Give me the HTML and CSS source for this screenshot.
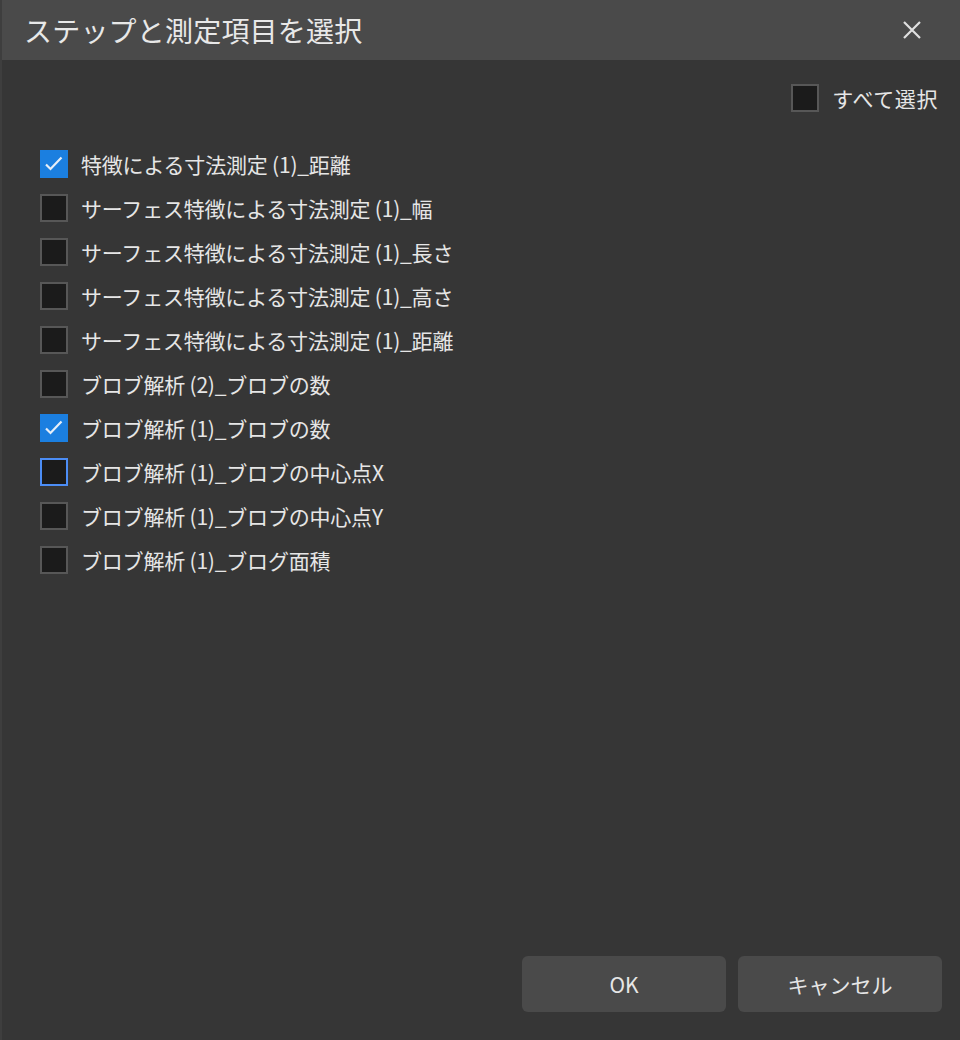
FILE: index.html
```html
<!DOCTYPE html>
<html lang="ja">
<head>
<meta charset="utf-8">
<title>ステップと測定項目を選択</title>
<link rel="stylesheet" href="styles.css">
</head>
<body>
<div class="dialog">
  <header class="titlebar">
    <h1 class="title">ステップと測定項目を選択</h1>
    <button class="close" aria-label="閉じる">
      <svg width="20" height="20" viewBox="0 0 20 20"><path d="M2 2 L18 18 M18 2 L2 18" stroke="#e0e0e0" stroke-width="2.2" fill="none"/></svg>
    </button>
  </header>
  <main class="content">
    <div class="select-all">
      <label class="item"><span class="box"></span><span class="label wide">すべて選択</span></label>
    </div>
    <ul class="list">
      <li class="item"><span class="box checked"><svg viewBox="0 0 28 28" width="28" height="28"><path d="M6 14.5 L10.5 19 L21.5 7.5" stroke="#e6eef8" stroke-width="2.2" fill="none"/></svg></span><span class="label">特徴による寸法測定 (1)_距離</span></li>
      <li class="item"><span class="box"></span><span class="label">サーフェス特徴による寸法測定 (1)_幅</span></li>
      <li class="item"><span class="box"></span><span class="label">サーフェス特徴による寸法測定 (1)_長さ</span></li>
      <li class="item"><span class="box"></span><span class="label">サーフェス特徴による寸法測定 (1)_高さ</span></li>
      <li class="item"><span class="box"></span><span class="label">サーフェス特徴による寸法測定 (1)_距離</span></li>
      <li class="item"><span class="box"></span><span class="label">ブロブ解析 (2)_ブロブの数</span></li>
      <li class="item"><span class="box checked"><svg viewBox="0 0 28 28" width="28" height="28"><path d="M6 14.5 L10.5 19 L21.5 7.5" stroke="#e6eef8" stroke-width="2.2" fill="none"/></svg></span><span class="label">ブロブ解析 (1)_ブロブの数</span></li>
      <li class="item"><span class="box focus"></span><span class="label">ブロブ解析 (1)_ブロブの中心点X</span></li>
      <li class="item"><span class="box"></span><span class="label">ブロブ解析 (1)_ブロブの中心点Y</span></li>
      <li class="item"><span class="box"></span><span class="label">ブロブ解析 (1)_ブログ面積</span></li>
    </ul>
    <footer class="actions">
      <button class="btn">OK</button>
      <button class="btn">キャンセル</button>
    </footer>
  </main>
</div>
</body>
</html>
```
FILE: styles.css
```css
html, body {
  margin: 0;
  padding: 0;
  height: 100%;
}
body {
  background: #363636;
  font-family: "Noto Sans CJK JP", "Noto Sans", sans-serif;
  color: #e6e6e6;
}
.dialog {
  height: 1040px;
  display: flex;
  flex-direction: column;
  border-left: 2px solid #3e3e3e;
  box-sizing: border-box;
}
.titlebar {
  height: 60px;
  flex: 0 0 60px;
  background: #4a4a4a;
  display: flex;
  align-items: center;
  justify-content: space-between;
  padding: 0 38px 0 22px;
}
.title {
  margin: 0;
  font-size: 28px;
  font-weight: 400;
  line-height: 1;
  color: #e8e8e8;
  letter-spacing: 0.2px;
}
.close {
  background: none;
  border: 0;
  padding: 0;
  width: 20px;
  height: 20px;
  display: flex;
}
.content {
  flex: 1;
  display: flex;
  flex-direction: column;
  padding: 24px 18px 28px 38px;
}
.select-all {
  display: flex;
  justify-content: flex-end;
  padding-right: 4px;
}
.list {
  list-style: none;
  margin: 38px 0 0 0;
  padding: 0;
  display: flex;
  flex-direction: column;
  gap: 16px;
}
.item {
  display: flex;
  align-items: center;
  height: 28px;
  gap: 13px;
}
.box {
  width: 28px;
  height: 28px;
  box-sizing: border-box;
  border: 2px solid #575757;
  background: #1b1b1b;
  flex: 0 0 28px;
  display: block;
}
.box.checked {
  border: 0;
  background: #1b7fe0;
}
.box.checked svg {
  display: block;
}
.box.focus {
  border-color: #4c8df5;
}
.label {
  font-size: 21px;
  line-height: 28px;
  color: #e6e6e6;
  white-space: nowrap;
  letter-spacing: -0.2px;
}
.label.wide {
  letter-spacing: 0.6px;
}
.actions {
  margin-top: auto;
  display: flex;
  justify-content: flex-end;
  gap: 12px;
}
.btn {
  width: 204px;
  height: 56px;
  border: 0;
  border-radius: 6px;
  background: #4a4a4a;
  color: #e6e6e6;
  font-family: "Noto Sans CJK JP", "Noto Sans", sans-serif;
  font-size: 21px;
}
```
